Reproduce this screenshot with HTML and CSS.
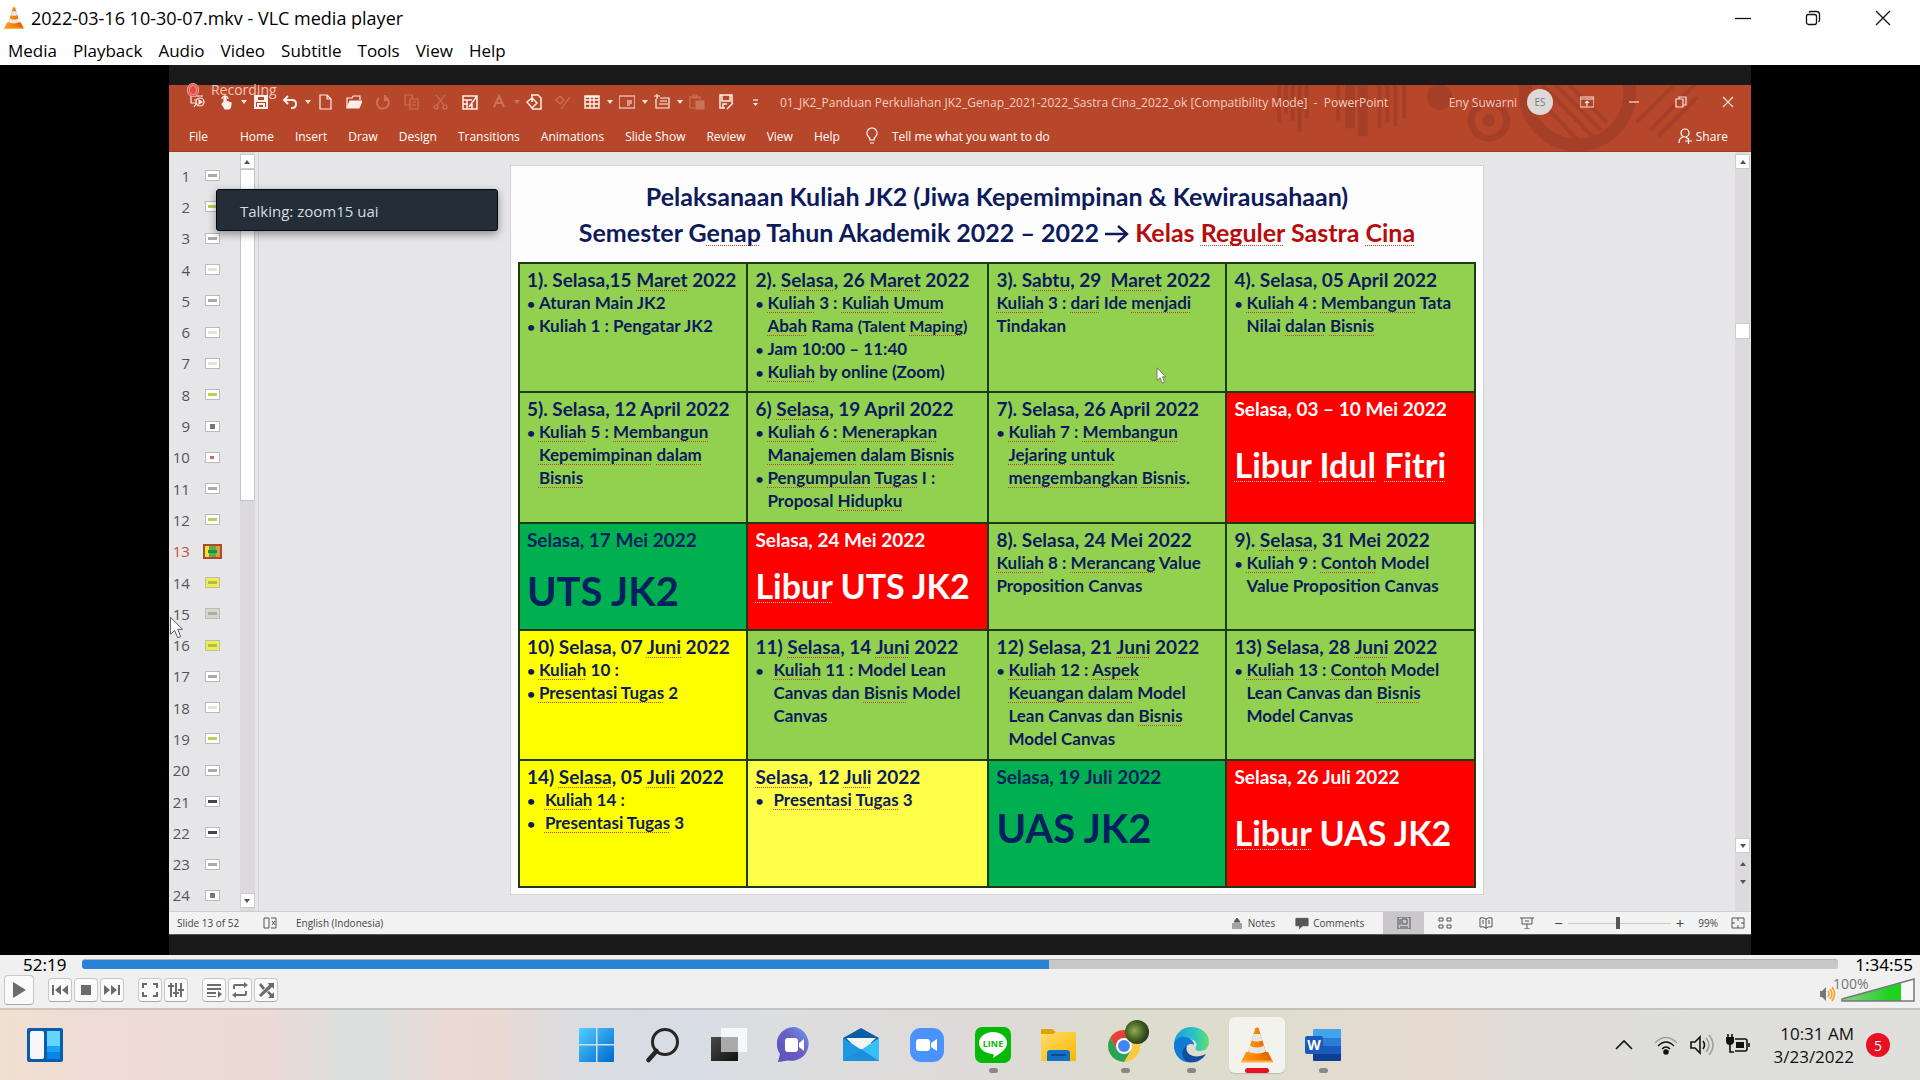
FILE: index.html
```html
<!DOCTYPE html>
<html lang="en">
<head>
<meta charset="utf-8">
<title>2022-03-16 10-30-07.mkv - VLC media player</title>
<link rel="stylesheet" href="styles.css">
</head>
<body>
<svg class="defs" aria-hidden="true">
  <defs>
    <linearGradient id="gWin" x1="0" y1="0" x2="1" y2="1"><stop offset="0" stop-color="#4fd0ff"/><stop offset="1" stop-color="#0067cf"/></linearGradient>
    <linearGradient id="gCone" x1="0" x2="1"><stop offset="0" stop-color="#ff9a1f"/><stop offset=".6" stop-color="#f57c00"/><stop offset="1" stop-color="#d95f00"/></linearGradient>
    <linearGradient id="gChat" x1="1" y1="0" x2="0" y2="1"><stop offset="0" stop-color="#6aa0f5"/><stop offset=".45" stop-color="#6b5fc4"/><stop offset="1" stop-color="#5a50c0"/></linearGradient>
    <linearGradient id="gEdge" x1="0" y1="0" x2="1" y2="0"><stop offset="0" stop-color="#1b9de2"/><stop offset=".6" stop-color="#2cc4c4"/><stop offset="1" stop-color="#66e066"/></linearGradient>
    <linearGradient id="gVol" x1="0" x2="1"><stop offset="0" stop-color="#8fd08f"/><stop offset=".8" stop-color="#1fd21f"/></linearGradient>
    <linearGradient id="gFold" x1="0" y1="0" x2="1" y2="1"><stop offset="0" stop-color="#ffdc6a"/><stop offset="1" stop-color="#f9b800"/></linearGradient>
    <linearGradient id="gDark" x1="0" y1="0" x2="1" y2="1"><stop offset="0" stop-color="#4a4a4a"/><stop offset="1" stop-color="#111"/></linearGradient>
    <symbol id="cone" viewBox="0 0 32 36">
      <path d="M5 25 0 35h32l-5-10z" fill="url(#gCone)"/><path d="M1 33.500h30l1 2H0z" fill="#ffb04d"/>
      <path d="M14.200 1.500C14.800 0 17.200 0 17.800 1.500L25.500 27c-3 3.500-16 3.500-19 0z" fill="url(#gCone)"/>
      <path d="m12.600 7 6.800 0 1.900 6.200c-2 1.800-8.600 1.800-10.600 0zM9 18.500c3 2.600 11 2.600 14 0l1.700 5.700c-3 3-14.400 3-17.400 0z" fill="#e6e6e6"/>
    </symbol>
    <symbol id="cursor" viewBox="0 0 12 19"><path d="M1 1v14l3.500-3 2.500 6 2.500-1-2.500-6H11z" fill="#fff" stroke="#555" stroke-width=".8"/></symbol>
  </defs>
</svg>

<div class="page">
<header class="titlebar">
  <svg class="app-icon" viewBox="0 0 32 36"><use href="#cone"/></svg>
  <h1>2022-03-16 10-30-07.mkv - VLC media player</h1>
  <div class="win-buttons">
    <button aria-label="Minimize"><svg width="16" height="16"><path d="M0 8.500h16"/></svg></button>
    <button aria-label="Restore"><svg width="16" height="16"><rect x="1.500" y="4.500" width="10" height="10" rx="2"/><path d="M4 2.500q.5-1 2-1h5.500q3 0 3 3V10q0 1.500-1 2"/></svg></button>
    <button aria-label="Close"><svg width="16" height="16"><path d="m1 1 14 14M15 1 1 15"/></svg></button>
  </div>
</header>
<nav class="menubar">
  <button>Media</button><button>Playback</button><button>Audio</button><button>Video</button><button>Subtitle</button><button>Tools</button><button>View</button><button>Help</button>
</nav>

<main class="stage">
<div class="video">
  <div class="letterbox"></div>
  <div class="ppt-head">
    <svg class="swirl" viewBox="0 0 440 67" fill="none" stroke="#8e3524" aria-hidden="true">
      <path d="M15 0v38M22 0v28M29 0v36M36 0v48M43 0v34M75 0v36M133 0v42M142 0v34M117 0v44M125 0v38" stroke-width="4"/>
      <path d="M87 0v44M100 0v52" stroke-width="10"/><circle cx="178" cy="12" r="13" fill="#8e3524" stroke="none"/>
      <circle cx="228" cy="36" r="18" stroke-width="7"/><circle cx="228" cy="36" r="6" fill="#8e3524"/>
      <circle cx="318" cy="8" r="53" stroke-width="13"/><path d="m272 8 52 54M282 0l55 56M296 0l46 46M310 0l38 38M392 46 440 -4M378 38l40-40M400 52l40-40" stroke-width="4"/>
    </svg>
    <div class="ppt-title">
      <div class="qat">
        <button aria-label="From beginning"><svg viewBox="0 0 16 16"><path d="M1 2h13M2 2v7h5M5 13l3-4M5 6h3"/><circle cx="11" cy="8" r="4"/><path d="m10 6 3 2-3 2z" fill="currentColor"/></svg></button>
        <button aria-label="Touch mode"><svg viewBox="0 0 16 16"><path d="M6 8V3q1-2 2 0v4l5 2q0 5-2 6H7L4 10z" fill="currentColor"/><path d="M4 5a3 3 0 0 1 6 0"/></svg></button><i class="caret"></i>
        <button aria-label="Save"><svg viewBox="0 0 16 16"><path d="M2 2h12v12H2zM4 2v5h8V2M5 14v-4h6v4" stroke-width="2"/></svg></button>
        <button aria-label="Undo"><svg viewBox="0 0 16 16"><path d="M3 6h7q4 0 4 4t-4 4H9M6 2 2 6l4 4" stroke-width="2"/></svg></button><i class="caret"></i>
        <button aria-label="New"><svg viewBox="0 0 16 16"><path d="M3 1h7l4 4v10H3zM10 1v4h4"/></svg></button>
        <button aria-label="Open"><svg viewBox="0 0 16 16"><path d="M1 14V4h5l1-2h7v4"/><path d="m1 14 3-7h12l-3 7z" fill="currentColor"/></svg></button>
        <button class="dim" aria-label="Redo"><svg viewBox="0 0 16 16"><path d="M10 3a6 6 0 1 1-6 1M10 1v5h4" stroke-width="2"/></svg></button>
        <button class="dim" aria-label="Copy"><svg viewBox="0 0 16 16"><path d="M6 11H1V1h7v4M6 5h8v10H6zM8 8h4M8 11h4"/></svg></button>
        <button class="dim" aria-label="Cut"><svg viewBox="0 0 16 16"><path d="m3 1 8 10M12 1 4 11"/><circle cx="3" cy="13" r="2"/><circle cx="12" cy="13" r="2"/></svg></button>
        <button aria-label="Edit"><svg viewBox="0 0 16 16"><path d="M1 2h14v13H1zM1 6h9M5 6v9M1 10h5M10 10v5M7 13l8-11" stroke-width="1.500"/></svg></button>
        <button class="dim" aria-label="Font colour"><svg viewBox="0 0 16 16"><path d="M3 13 8 2l5 11M5 9h6" stroke-width="2"/></svg></button><i class="caret dim"></i>
        <button aria-label="Format"><svg viewBox="0 0 16 16"><path d="M5 1h7l3 3v11H6M1 8l5-4 5 5-5 5zM6 1v7" stroke-width="1.500"/></svg></button>
        <button class="dim" aria-label="Fill"><svg viewBox="0 0 16 16"><path d="m1 6 4-4 4 4-4 4zM15 3l-6 8-3 4"/></svg></button>
        <button aria-label="Table"><svg viewBox="0 0 16 16"><path d="M1 2h14v12H1zM1 3h14M1 6h14M1 10h14M6 3v11M10 3v11" stroke-width="1.500"/></svg></button><i class="caret"></i>
        <button aria-label="Text box"><svg viewBox="0 0 16 16"><path d="M0 2h16v12H0zM8 7h5M8 9h5M8 11h3"/></svg></button><i class="caret"></i>
        <button aria-label="New slide"><svg viewBox="0 0 16 16"><path d="M2 5v9h13V4H6M6 7h7M5 10h9M3 0v5M0 2h6"/></svg></button><i class="caret"></i>
        <button class="dim" aria-label="Paste"><svg viewBox="0 0 16 16"><path d="M6 14H1V3h10v3M4 1h4v3H4z"/><path d="M7 7h8v8H7z" fill="currentColor"/></svg></button>
        <button aria-label="Save as"><svg viewBox="0 0 16 16"><path d="M14 9V1H2v13h5M4 1v6h8V1M5 14v-4h4M9 15l6-6" stroke-width="1.500"/></svg></button>
        <button aria-label="Customize"><svg viewBox="0 0 16 16"><path d="M6 6h5"/><path d="M6 9h5l-2.500 3z" fill="currentColor" stroke="none"/></svg></button>
      </div>
      <p class="doc-name">01_JK2_Panduan Perkuliahan JK2_Genap_2021-2022_Sastra Cina_2022_ok [Compatibility Mode]&nbsp; - &nbsp;PowerPoint</p>
      <div class="ppt-user"><span>Eny Suwarni</span><b class="avatar">ES</b></div>
      <div class="ppt-win">
        <button aria-label="Ribbon options"><svg viewBox="0 0 14 14"><path d="M0 2h14v10H0zM0 4h14M7 11V6M5 8l2-2 2 2"/></svg></button>
        <button aria-label="Minimize"><svg viewBox="0 0 14 14"><path d="M2 7h10"/></svg></button>
        <button aria-label="Restore"><svg viewBox="0 0 14 14"><path d="M2 4h7v8H2zM5 4V2h7v8H9"/></svg></button>
        <button aria-label="Close"><svg viewBox="0 0 14 14"><path d="m2 2 10 10M12 2 2 12"/></svg></button>
      </div>
    </div>
    <div class="ribbon">
      <button class="file">File</button><button>Home</button><button>Insert</button><button>Draw</button><button>Design</button><button>Transitions</button><button>Animations</button><button>Slide Show</button><button>Review</button><button>View</button><button>Help</button>
      <button class="tell"><svg viewBox="0 0 12 18"><path d="M4 13q0-2-2-4a5 5 0 1 1 8 0q-2 2-2 4zM4 16h4"/></svg>Tell me what you want to do</button>
      <button class="share"><svg viewBox="0 0 14 16"><circle cx="7" cy="5" r="4"/><path d="M1 15q0-5 4-6M8 9l2 2M7 13h7M10.500 10v6"/></svg>Share</button>
    </div>
    <p class="recording"><i></i>Recording</p>
  </div>

  <div class="workspace">
    <ol class="thumbs">
      <li>1<i class="a"></i></li><li>2<i class="y"></i></li><li>3<i class="a"></i></li><li>4<i class="l"></i></li><li>5<i class="a"></i></li><li>6<i class="l"></i></li><li>7<i class="l"></i></li><li>8<i class="y"></i></li><li>9<i class="d"></i></li><li>10<i class="r"></i></li><li>11<i class="a"></i></li><li>12<i class="y"></i></li><li class="on">13<i></i></li><li>14<i class="f"></i></li><li>15<i class="g"></i></li><li>16<i class="f"></i></li><li>17<i class="a"></i></li><li>18<i class="l"></i></li><li>19<i class="y"></i></li><li>20<i class="a"></i></li><li>21<i class="k"></i></li><li>22<i class="k"></i></li><li>23<i class="a"></i></li><li>24<i class="d"></i></li>
    </ol>
    <div class="scroll left"><i class="up"></i><i class="thumb"></i><i class="down"></i></div>
    <div class="canvas">
      <section class="slide">
        <h2>Pelaksanaan Kuliah JK2 (Jiwa Kepemimpinan &amp; Kewirausahaan)<br>Semester G<u>enap</u> Tahun Akademik 2022 – 2022 <svg class="arrow" viewBox="0 0 24 20"><path d="M0 10h22M13 2l9 8-9 8"/></svg> <em>Kelas <u>Reguler</u> Sastra <u>Cina</u></em></h2>
        <table>
          <colgroup><col class="c1"><col class="c2"><col class="c3"><col class="c4"></colgroup>
          <tr class="r1">
            <td><h3>1). Selasa,15 <u>Maret</u> 2022</h3><ul><li>Aturan Main JK2</li><li>Kuliah 1 : Pengatar JK2</li></ul></td>
            <td><h3>2). <u>Selasa</u>, 26 <u>Maret</u> 2022</h3><ul><li><u>Kuliah</u> 3 : <u>Kuliah</u> <u>Umum</u><br><u>Abah</u> Rama <small>(Talent <u>Maping</u>)</small></li><li>Jam 10:00 – 11:40</li><li><u>Kuliah</u> by online (Zoom)</li></ul></td>
            <td><h3>3). S<u>abtu</u>, 29&nbsp; <u>Maret</u> 2022</h3><p><u>Kuliah</u> 3 : <u>dari</u> Ide <u>menjadi</u><br>Tindakan</p></td>
            <td><h3>4). Selasa, 05 April 2022</h3><ul><li><u>Kuliah</u> 4 : <u>Membangun</u> Tata<br>Nilai <u>dalan</u> <u>Bisnis</u></li></ul></td>
          </tr>
          <tr class="r2">
            <td><h3>5). Selasa, 12 April 2022</h3><ul><li><u>Kuliah</u> 5 : <u>Membangun</u><br><u>Kepemimpinan</u> <u>dalam</u><br><u>Bisnis</u></li></ul></td>
            <td><h3>6) <u>Selasa</u>, 19 April 2022</h3><ul><li><u>Kuliah</u> 6 : <u>Menerapkan</u><br><u>Manajemen</u> <u>dalam</u> <u>Bisnis</u></li><li><u>Pengumpulan</u> <u>Tugas</u> I :<br>Proposal <u>Hidupku</u></li></ul></td>
            <td><h3>7). Selasa, 26 April 2022</h3><ul><li><u>Kuliah</u> 7 : <u>Membangun</u><br><u>Jejaring</u> <u>untuk</u><br><u>mengembangkan</u> <u>Bisnis</u>.</li></ul></td>
            <td class="red"><h3>Selasa, 03 – 10 Mei 2022</h3><p class="holiday low"><u>Libur</u> <u>Idul</u> <u>Fitri</u></p></td>
          </tr>
          <tr class="r3">
            <td class="green"><h3>Selasa, 17 Mei 2022</h3><p class="exam">UTS JK2</p></td>
            <td class="red"><h3>Selasa, 24 Mei 2022</h3><p class="holiday"><u>Libur</u> UTS JK2</p></td>
            <td><h3>8). Selasa, 24 Mei 2022</h3><p><u>Kuliah</u> 8 : <u>Merancang</u> Value<br>Proposition Canvas</p></td>
            <td><h3>9). <u>Selasa</u>, 31 Mei 2022</h3><ul><li><u>Kuliah</u> 9 : <u>Contoh</u> Model<br>Value Proposition Canvas</li></ul></td>
          </tr>
          <tr class="r4">
            <td class="yellow"><h3>10) Selasa, 07 <u>Juni</u> 2022</h3><ul><li><u>Kuliah</u> 10 :</li><li><u>Presentasi</u> <u>Tugas</u> 2</li></ul></td>
            <td><h3>11) <u>Selasa</u>, 14 <u>Juni</u> 2022</h3><ul class="wide"><li><u>Kuliah</u> 11 : Model Lean<br>Canvas dan <u>Bisnis</u> Model<br>Canvas</li></ul></td>
            <td><h3>12) Selasa, 21 <u>Juni</u> 2022</h3><ul><li><u>Kuliah</u> 12 : <u>Aspek</u><br><u>Keuangan</u> <u>dalam</u> Model<br>Lean Canvas dan <u>Bisnis</u><br>Model Canvas</li></ul></td>
            <td><h3>13) Selasa, 28 <u>Juni</u> 2022</h3><ul><li><u>Kuliah</u> 13 : <u>Contoh</u> Model<br>Lean Canvas dan <u>Bisnis</u><br>Model Canvas</li></ul></td>
          </tr>
          <tr class="r5">
            <td class="yellow"><h3>14) <u>Selasa</u>, 05 <u>Juli</u> 2022</h3><ul class="wide"><li><u>Kuliah</u> 14 :</li><li><u>Presentasi</u> <u>Tugas</u> 3</li></ul></td>
            <td class="pale"><h3><u>Selasa</u>, 12 <u>Juli</u> 2022</h3><ul class="wide"><li><u>Presentasi</u> <u>Tugas</u> 3</li></ul></td>
            <td class="green"><h3>Selasa, 19 <u>Juli</u> 2022</h3><p class="exam">UAS JK2</p></td>
            <td class="red"><h3>Selasa, 26 <u>Juli</u> 2022</h3><p class="holiday low"><u>Libur</u> UAS JK2</p></td>
          </tr>
        </table>
        <svg class="pointer" viewBox="0 0 12 19"><use href="#cursor"/></svg>
      </section>
    </div>
    <div class="scroll right"><i class="up"></i><i class="knob"></i><i class="down"></i><i class="page-nav up"></i><i class="page-nav down"></i></div>
    <p class="talking">Talking: zoom15 uai</p>
    <svg class="pointer-big" viewBox="0 0 12 19"><use href="#cursor"/></svg>
  </div>

  <footer class="status">
    <span class="s-num">Slide 13 of 52</span>
    <svg class="s-ico s-book" viewBox="0 0 14 12"><path d="M6 11H1V1h5v10M8 1h5v10H8M9 4l3 4M12 4 9 8"/></svg>
    <span class="s-lang">English (Indonesia)</span>
    <button class="s-notes"><svg class="s-ico" viewBox="0 0 12 12"><path d="M1 7h10M1 9h10M1 11h10"/><path d="M3 5h6L6 1z" fill="currentColor"/></svg>Notes</button>
    <button class="s-comm"><svg class="s-ico" viewBox="0 0 15 12"><path d="M1 1h13v8H8l-3 3V9H1z" fill="#555" stroke="#555"/></svg>Comments</button>
    <button class="view on" aria-label="Normal"><svg class="s-ico" viewBox="0 0 14 12"><path d="M1 0h12v12H1zM3 10h8M5 2h5v5H5zM3 2v6"/></svg></button>
    <button class="view" aria-label="Sorter"><svg class="s-ico" viewBox="0 0 14 12"><path d="M1 1h4v3H1zM9 1h4v3H9zM1 8h4v3H1zM9 8h4v3H9z"/></svg></button>
    <button class="view" aria-label="Reading"><svg class="s-ico" viewBox="0 0 14 12"><path d="M7 2v10M7 2Q4 0 1 1v9q3-1 6 1 3-2 6-1V1q-3-1-6 1M3 4h2M3 6h2M9 4h2M9 6h2"/></svg></button>
    <button class="view" aria-label="Slide show"><svg class="s-ico" viewBox="0 0 14 12"><path d="M0 1h14M2 1v6h10V1M7 7v5M4 12h6M5 4h4"/></svg></button>
    <span class="zoom"><b>−</b><input type="range" aria-label="Zoom level" min="0" max="100" value="49"><b>+</b></span>
    <span class="pct">99%</span>
    <svg class="s-ico s-fit" viewBox="0 0 14 12"><path d="M1 1h12v10H1zM7 1v3M7 8v3M1 6h3M10 6h3"/></svg>
  </footer>
  <div class="letterbox end"></div>
</div>
</main>

<section class="controls">
  <div class="seek"><time>52:19</time><input type="range" aria-label="Position" min="0" max="100" value="55"><time>1:34:55</time></div>
  <div class="buttons">
    <button class="play" aria-label="Play"><svg viewBox="0 0 18 18"><path d="M3 1v16l13-8z"/></svg></button>
    <div class="group">
      <button aria-label="Previous"><svg viewBox="0 0 18 18"><path d="M1 4h2v10H1zM10 4v10L4 9zM17 4v10l-6-5z"/></svg></button>
      <button aria-label="Stop"><svg viewBox="0 0 18 18"><path d="M4 4h10v10H4z"/></svg></button>
      <button aria-label="Next"><svg viewBox="0 0 18 18"><path d="M15 4h2v10h-2zM1 4v10l6-5zM8 4v10l6-5z"/></svg></button>
    </div>
    <div class="group">
      <button aria-label="Fullscreen"><svg viewBox="0 0 18 18"><path d="M1 2h5v2H3v3H1zM12 2h5v5h-2V4h-3zM1 11h2v3h3v2H1zM15 11h2v5h-5v-2h3z"/></svg></button>
      <button aria-label="Equalizer"><svg viewBox="0 0 18 18"><path d="M3 2h2v14H3zM1 4h6v2H1zM8 2h2v14H8zM6 11h6v2H6zM13 2h2v14h-2zM11 8h6v2h-6z"/></svg></button>
    </div>
    <div class="group">
      <button aria-label="Playlist"><svg viewBox="0 0 18 18"><path d="M2 3h14v2H2zM2 7h14v2H2zM2 11h9v2H2zM2 15h9v1H2zM13 10l4 3-4 4z"/></svg></button>
      <button aria-label="Loop"><svg viewBox="0 0 18 18"><path d="M2 8V5q0-2 2-2h9V1l4 3-4 3V5H4v3zM16 10v3q0 2-2 2H5v2l-4-3 4-3v2h9v-3z"/></svg></button>
      <button aria-label="Random"><svg viewBox="0 0 18 18"><path d="m2 4 2-2 4 5-2 2zM10 11l2-1 3 3 2-2v6h-6l2-2zM2 14 12 4l-1-2h6v6l-2-2L4 16z"/></svg></button>
    </div>
    <div class="volume">
      <svg class="spk" viewBox="0 0 16 16"><path d="M1 5h2l4-4v14l-4-4H1z" fill="#777"/><path d="M9 5q2 3 0 6M11 3q4 5 0 10M13 1q5 7 0 14" fill="none" stroke="#ff9a1f" stroke-width="1.500"/></svg>
      <div class="vol-meter"><span>100%</span><svg viewBox="0 0 74 24"><path d="M1 21 73 1v22H1z" fill="#f8f8f8"/><path d="M1 21 60 5v18H1z" fill="url(#gVol)"/><path d="M1 21 73 1v22H1z" fill="none" stroke="#777" stroke-width="1.500"/></svg></div>
    </div>
  </div>
</section>

<footer class="taskbar">
  <button class="widgets" aria-label="Widgets"><svg viewBox="0 0 36 34"><rect width="36" height="34" rx="2" fill="#0b5cad"/><rect x="3" y="3" width="14" height="28" rx="2" fill="#f7f7f7"/><path d="M20 3h13v15H20z" fill="#63d6ff"/><path d="M20 18h13v6H20z" fill="#1aa3f5"/><path d="M20 24h13v7H20z" fill="#0584ea"/></svg></button>
  <div class="apps">
    <button aria-label="Start"><svg viewBox="0 0 36 36"><path d="M0 2q0-1 1-1h16v16H0zM18.500 1H34q1 0 1 1v15H18.500zM0 18.500h17V35H1q-1 0-1-1zM18.500 18.500H35V34q0 1-1 1H18.500z" fill="url(#gWin)"/></svg></button>
    <button aria-label="Search"><svg viewBox="0 0 36 36" fill="none" stroke="#262626"><circle cx="20" cy="15" r="12.500" stroke-width="3"/><path d="m11.500 24-8 9" stroke-width="4.500" stroke-linecap="round"/></svg></button>
    <button aria-label="Task view"><svg viewBox="0 0 36 36"><path d="M0 10h27v24H0z" fill="url(#gDark)"/><path d="M10 1h26v24H10z" fill="#fff" opacity=".75"/><path d="M10 10h17v15H10z" fill="#aaa"/></svg></button>
    <button aria-label="Chat"><svg viewBox="0 0 36 36"><path d="M18 0a17 17 0 1 1-7 33.500L1 35l2-8A17 17 0 0 1 18 0z" fill="url(#gChat)"/><rect x="8" y="11" width="13" height="14" rx="3" fill="#fff"/><path d="m22 16 5-4v12l-5-4z" fill="#fff"/></svg></button>
    <button aria-label="Mail"><svg viewBox="0 0 36 36"><path d="M0 11 18 1l18 10v5H0z" fill="#0a5ea8"/><path d="M3 11h30L18 25z" fill="#f4f4f4"/><path d="M0 11v23h36z" fill="#1b9ae4"/><path d="m18 23 18-12v23z" fill="#36c0f6"/><path d="m0 34 18-12 18 12z" fill="#1e8fdc"/></svg></button>
    <button aria-label="Zoom"><svg viewBox="0 0 36 36"><rect x="1" y="1" width="34" height="34" rx="11" fill="#4a93ff"/><rect x="7" y="12" width="14" height="12" rx="3" fill="#fff"/><path d="m22 16 6-4v12l-6-4z" fill="#fff"/></svg></button>
    <button class="run" aria-label="LINE"><svg viewBox="0 0 36 36"><rect width="36" height="36" rx="7" fill="#06b906"/><path d="M18 5c8 0 14 5 14 11 0 7-8 11-14 15 1-3 1-4-1-4C10 26 4 22 4 16 4 10 10 5 18 5z" fill="#fff"/><text x="18" y="20" text-anchor="middle" font-size="9" font-weight="700" fill="#06b906">LINE</text></svg></button>
    <button aria-label="File Explorer"><svg viewBox="0 0 36 36"><path d="M0 2h11l4 3-3 5H0z" fill="#dda20c"/><path d="M0 7h12l3-2h20v29H0z" fill="url(#gFold)"/><path d="M6 34V26q0-3 3-3h17q3 0 3 3v8z" fill="#1070c4"/><path d="M10 28h15" stroke="#0a4c8c" stroke-width="2"/></svg></button>
    <button class="run" aria-label="Chrome"><svg viewBox="0 0 36 36"><circle cx="17" cy="19" r="16" fill="#fbc93c"/><path d="M3.200 11A16 16 0 0 1 31 11H17l-7 12z" fill="#e1433b"/><path d="M3.200 11A16 16 0 0 0 17 35l7-12-7 4-7-4z" fill="#28a35a"/><circle cx="17" cy="19" r="8" fill="#fff"/><circle cx="17" cy="19" r="6" fill="#4285f4"/></svg><i class="profile"></i></button>
    <button class="run" aria-label="Edge"><svg viewBox="0 0 36 36"><path d="M1 18C1 7 9 0 18 0c11 0 18 7 18 15 0 6-4 9-9 9-4 0-5-2-4-4 3-7-7-10-13-6C5 16 2 22 5 28q-4-4-4-10z" fill="url(#gEdge)"/><path d="M1 17c2-6 7-8 11-7 5 1 9 4 9 8-5-3-10 2-8 8 2 5 7 8 13 7-13 7-26-2-25-16z" fill="#0f7bd6"/><path d="M14 19c-3 8 7 14 19 8-5 8-13 10-20 7-5-5-5-12 1-15z" fill="#114f9e"/></svg></button>
    <button class="active" aria-label="VLC media player"><svg viewBox="0 0 32 36"><use href="#cone"/></svg></button>
    <button class="run" aria-label="Word"><svg viewBox="0 0 36 36"><path d="M8 3q0-1 1-1h26q1 0 1 1v8H8z" fill="#41a5ee"/><path d="M8 11h28v8H8z" fill="#2b7cd3"/><path d="M8 19h28v8H8z" fill="#185abd"/><path d="M8 27h28v6q0 1-1 1H9q-1 0-1-1z" fill="#103f91"/><rect y="9" width="18" height="18" rx="2" fill="#185abd"/><text x="9" y="23" text-anchor="middle" font-size="14" font-weight="700" fill="#fff">W</text></svg></button>
  </div>
  <div class="tray">
    <svg class="chev" viewBox="0 0 18 24"><path d="m1 16 8-8 8 8"/></svg>
    <svg class="net" viewBox="0 0 24 24"><path d="M1 10Q12-1 23 10" opacity=".3"/><path d="M4 13q8-8 16 0M8 16q4-4 8 0"/><circle cx="12" cy="19" r="2" fill="#111"/></svg>
    <svg class="net" viewBox="0 0 24 24"><path d="M1 9h4l5-5v16l-5-5H1zM13 8q3 4 0 8"/><path d="M16 5q6 7 0 14M19 2q8 10 0 20" opacity=".3"/></svg>
    <svg class="net" viewBox="0 0 24 24"><path d="M9 6h10q2 0 2 2v8q0 2-2 2H9M23 10v4"/><path d="M10 9h8v6h-8zM0 4h8v5q-1 3-4 3-4 0-4-4z" fill="#111" stroke="none"/><path d="M2 1v4M6 1v4M4 11v8h4"/></svg>
    <div class="clock"><time>10:31 AM</time><time>3/23/2022</time></div>
    <b class="badge">5</b>
  </div>
</footer>
</div>
</body>
</html>
```
FILE: styles.css
```css
* { box-sizing: border-box; }
html, body { margin: 0; height: 100%; }
body { font-family: "Open Sans", "Noto Sans", sans-serif; font-size: 16px; color: #000; }
button { border: 0; background: none; padding: 0; margin: 0; font: inherit; color: inherit; }
h1, h2, h3, p, ul, ol { margin: 0; padding: 0; list-style: none; }
svg { display: block; }
.defs { position: absolute; width: 0; height: 0; }
.page { min-height: 100%; display: flex; flex-direction: column; background: #fff; }

/* VLC window frame */
.titlebar { display: flex; align-items: center; height: 35px; padding: 0 2px 0 4px; }
.app-icon { width: 20px; height: 24px; margin-right: 7px; }
.titlebar h1 { font-size: 18px; line-height: 24px; font-weight: 400; flex: 1; }
.win-buttons { display: flex; }
.win-buttons button { width: 70px; height: 34px; display: grid; place-items: center; }
.win-buttons svg { fill: none; stroke: #111; stroke-width: 1.3; }
.menubar { display: flex; gap: 16px; height: 30px; padding: 0 8px; font-size: 17px; }

/* Video picture */
.stage { flex: 1; display: flex; justify-content: center; background: #000; }
.video { width: 82.4%; display: flex; flex-direction: column; font-size: 12px; }
.letterbox { height: 20px; background: #1a1a1a; }
.letterbox.end { border-top: 1px solid #555; height: 21px; }
.ppt-head { position: relative; height: 67px; background: #b7472a; color: #fbe3db; border-bottom: 1px solid #a03c22; }
.swirl { position: absolute; right: 50px; top: 0; width: 440px; height: 66px; opacity: .4; }
.ppt-title { position: relative; display: flex; align-items: center; height: 34px; }
.qat { display: flex; align-items: center; padding-left: 14px; }
.qat button { width: 29px; height: 24px; display: grid; place-items: center; color: #fdeee9; }
.qat svg { width: 16px; height: 16px; fill: none; stroke: currentColor; stroke-width: 1.2; }
.qat .dim { color: #cc7258; }
.caret { width: 6px; border: 3px solid transparent; border-top: 4px solid #fbe3db; border-bottom: 0; }
.caret.dim { border-top-color: #cc7258; }
.doc-name { margin-left: 10px; white-space: nowrap; color: #f6cdbf; }
.ppt-user { margin-left: auto; display: flex; align-items: center; gap: 10px; color: #f6cdbf; }
.avatar { width: 26px; height: 26px; border-radius: 50%; background: #dcd9d8; color: #777; font-size: 10px; font-weight: 400; display: grid; place-items: center; }
.ppt-win { display: flex; margin-left: 10px; }
.ppt-win button { width: 47px; height: 30px; display: grid; place-items: center; }
.ppt-win svg { width: 14px; height: 14px; fill: none; stroke: #fbe3db; stroke-width: 1.2; }
.ribbon { position: relative; display: flex; align-items: center; gap: 21px; height: 32px; padding: 2px 23px 0 20px; color: #fff; }
.ribbon .file { margin-right: 11px; }
.ribbon svg { fill: none; stroke: currentColor; stroke-width: 1.2; }
.tell { display: flex; align-items: center; gap: 14px; margin-left: 5px; }
.tell svg { width: 12px; height: 18px; }
.share { display: flex; align-items: center; gap: 4px; margin-left: auto; }
.share svg { width: 14px; height: 16px; }
.recording { position: absolute; left: 18px; top: -5px; display: flex; align-items: center; gap: 12px; font-size: 14px; line-height: 20px; color: #f3c6ba; }
.recording i { width: 12px; height: 14px; border-radius: 6px; background: #e24a45; border: 3px double #f2a59a; }

/* PowerPoint workspace */
.workspace { position: relative; flex: 1; display: flex; background: #e6e6e8; }
.thumbs { width: 71px; padding: 8px 20px 0 0; display: flex; flex-direction: column; font-size: 15px; color: #555; }
.thumbs li { flex: 1; display: flex; align-items: center; justify-content: flex-end; gap: 15px; line-height: 20px; }
.thumbs i { width: 15px; height: 11px; background: #fff; border: 1px solid #bbb; display: grid; place-items: center; }
.thumbs i::after { content: ""; width: 9px; height: 3px; background: #aaa; }
.thumbs .y::after { background: #c5cc55; }
.thumbs .l::after { background: #e2e6d8; }
.thumbs .r::after { background: #d66; width: 4px; }
.thumbs .d::after { background: #777; width: 5px; height: 5px; }
.thumbs .k::after { background: #445; }
.thumbs .f { background: #eef04a; }
.thumbs .f::after { background: #b6b850; }
.thumbs .g { background: #d5d8c6; }
.thumbs .on { color: #c9503a; gap: 13px; margin-right: -2px; }
.thumbs .on i { width: 19px; height: 15px; background: linear-gradient(90deg, #e8e83a 30%, #57b04a 30% 75%, #d2a04a 75%); border: 2px solid #b7472a; }
.thumbs .on i::after { background: #2c8a3c; }
.scroll { width: 15px; display: flex; flex-direction: column; align-items: stretch; background: #dcdadd; }
.scroll .up, .scroll .down { height: 15px; background: #fff; border: 1px solid #ccc; display: grid; place-items: center; }
.scroll .up::after { content: ""; border: 3px solid transparent; border-bottom: 4px solid #555; border-top: 0; }
.scroll .down::after { content: ""; border: 3px solid transparent; border-top: 4px solid #555; border-bottom: 0; }
.scroll.left { padding: 2px 0 3px; }
.scroll .thumb { height: 44%; background: #fff; border: 1px solid #c4c4c6; }
.scroll.left .down { margin-top: auto; }
.scroll.right { padding: 2px 0 22px; margin-right: 1px; }
.scroll .knob { height: 16px; margin-top: 154px; background: #fff; border: 1px solid #ccc; }
.scroll.right .down { margin-top: auto; }
.scroll.right .page-nav { margin: 3px 0 0; background: none; border: 0; }
.canvas { flex: 1; display: flex; flex-direction: column; align-items: center; padding: 13px 0 16px; margin-left: 3px; border-left: 1px solid #d2d2d4; }
.slide { position: relative; width: 66%; flex: 1; background: #fdfdfd; border: 1px solid #d4d4d6; padding: 12px 7px 6px; font-family: Lato, "Open Sans", sans-serif; color: #0d1b5c; white-space: nowrap; }
.slide h2 { font-size: 25px; line-height: 36px; font-weight: 700; text-align: center; padding-bottom: 12px; }
.slide em { font-style: normal; color: #b80c0c; }
.slide u { text-decoration: underline dotted 1px #d0402c; text-decoration-skip-ink: none; text-underline-offset: 3px; }
.arrow { display: inline-block; width: 24px; height: 20px; vertical-align: -2px; fill: none; stroke: #0d1b5c; stroke-width: 2.5; }
.slide table { width: 100%; table-layout: fixed; border-collapse: collapse; font-size: 17px; line-height: 23px; font-weight: 700; }
.c1 { width: 23.9%; } .c2 { width: 25.2%; } .c3 { width: 24.9%; } .c4 { width: 26%; }
.r1 { height: 129px; } .r2 { height: 131px; } .r3 { height: 107px; } .r4 { height: 130px; } .r5 { height: 127px; }
.slide td { vertical-align: top; padding: 4px 7px 0; border: 2px solid #1d3a12; background: #92d050; }
.slide h3 { font-size: 19px; line-height: 23px; font-weight: 700; }
.slide small { font-size: 16px; }
.slide li { padding-left: 12px; }
.slide li::before { content: "•"; display: inline-block; width: 12px; margin-left: -12px; font-size: 14px; line-height: 16px; }
.slide .wide li { padding-left: 18px; }
.slide .wide li::before { width: 18px; margin-left: -18px; }
.slide .green { background: #00b050; color: #002060; }
.slide .red { background: #f00; color: #fff; }
.slide .yellow { background: #ff0; }
.slide .pale { background: #ffff4a; }
.exam { font-size: 40px; line-height: 48px; padding-top: 16px; }
.holiday { font-size: 34px; line-height: 40px; padding-top: 15px; }
.holiday.low { padding-top: 25px; }
.red .holiday u { text-decoration-color: #fcc; }
.pointer { position: absolute; left: 66.4%; top: 201px; width: 11px; height: 17px; }
.pointer-big { position: absolute; left: 0; top: 464px; width: 15px; height: 23px; }
.talking { position: absolute; left: 47px; top: 37px; width: 282px; height: 42px; padding: 0 23px; line-height: 42px; font-size: 15px; color: #d8dce0; background: #242e39; border: 1px solid #05080b; border-radius: 3px; box-shadow: 0 3px 8px rgba(0,0,0,.4); }

/* PowerPoint status bar */
.status { height: 23px; display: flex; align-items: center; background: #f2f2f2; border-top: 1px solid #cfcfcf; padding: 0 6px 0 8px; font-size: 10px; color: #444; }
.s-ico { width: 14px; height: 12px; fill: none; stroke: #555; stroke-width: 1; color: #555; }
.s-num { width: 86px; }
.s-lang { margin-left: 19px; }
.s-notes, .s-comm { display: flex; align-items: center; gap: 4px; }
.s-notes { margin-left: auto; }
.s-comm { margin: 0 19px 0 20px; }
.view { width: 41px; height: 22px; display: grid; place-items: center; }
.view.on { background: #c9c7ca; }
.zoom { display: flex; align-items: center; gap: 5px; margin-left: 7px; }
.zoom b { font-size: 15px; font-weight: 400; line-height: 16px; }
input[type=range] { appearance: none; margin: 0; background: none; }
.zoom input { width: 103px; height: 12px; }
.zoom input::-webkit-slider-runnable-track { height: 12px; background: linear-gradient(#ccc, #ccc) center / 100% 1px no-repeat; }
.zoom input::-webkit-slider-thumb { appearance: none; width: 4px; height: 12px; background: #555; }
.pct { margin: 0 13px 0 14px; }

/* VLC controls */
.controls { background: #f0f0f0; }
.seek { display: flex; align-items: flex-start; padding: 0 7px 0 23px; height: 20px; }
.seek time { font-family: "Noto Sans", sans-serif; font-size: 17px; line-height: 20px; }
.seek input { flex: 1; height: 10px; margin: 4px 17px 0 16px; }
.seek input::-webkit-slider-runnable-track { height: 10px; border-radius: 3px; border-top: 1px solid #b0b0b0; background: linear-gradient(90deg, #2a82d6 55%, #c8c8c8 55%); }
.seek input::-webkit-slider-thumb { appearance: none; width: 1px; height: 9px; background: #2a82d6; }
.buttons { display: flex; align-items: center; gap: 14px; height: 33px; padding: 0 5px 3px 4px; }
.group { display: flex; gap: 2px; }
.buttons button { width: 24px; height: 24px; display: grid; place-items: center; background: #fafafa; border: 1px solid #c8c8c8; border-bottom-color: #aaa; border-radius: 4px; }
.buttons button svg { width: 18px; height: 18px; fill: #6b6b6b; }
.buttons .play { width: 30px; height: 30px; }
.volume { margin-left: auto; display: flex; align-items: flex-end; gap: 6px; }
.spk { width: 16px; height: 16px; }
.vol-meter { position: relative; }
.vol-meter svg { width: 74px; height: 24px; }
.vol-meter span { position: absolute; left: -8px; top: -3px; font-size: 14px; line-height: 18px; color: #777; }

/* Windows taskbar */
.taskbar { position: relative; height: 72px; display: flex; align-items: center; justify-content: space-between; padding: 0 30px 0 27px; border-top: 2px solid rgba(120,120,110,.25);
  background: linear-gradient(90deg, #f0e0d0, #efdcd6 4%, #ecdad5 14%, #dde0df 18%, #dddfde 20%, #ebdad4 23%, #e9d9d3 26%, #dadce0 30%, #d8dde5 36%, #dddddd 42%, #dedad9 50%, #dcdccf 58%, #e0dccf 68%, #e7dad0 75%, #dddcd8 80%, #dfe0dd); }
.widgets svg { width: 36px; height: 34px; }
.apps { position: absolute; left: 50%; top: 7px; transform: translateX(-50%); display: flex; gap: 10px; }
.apps button { position: relative; width: 56px; height: 56px; display: grid; place-items: center; border-radius: 6px; }
.apps svg { width: 36px; height: 36px; }
.apps text { font-family: "Open Sans", sans-serif; }
.apps .run::after, .apps .active::after { content: ""; position: absolute; bottom: 0; left: 24px; width: 9px; height: 5px; border-radius: 3px; background: #888; }
.apps .active { background: rgba(247,247,243,.85); box-shadow: 0 1px 1px rgba(0,0,0,.15); }
.apps .active::after { left: 16px; width: 24px; background: #e81123; }
.profile { position: absolute; top: 3px; right: 4px; width: 24px; height: 24px; border-radius: 50%; background: radial-gradient(circle at 40% 45%, #9aa85a, #4a6a24 40%, #1e2a18 80%); }
.tray { margin-left: auto; display: flex; align-items: center; gap: 12px; }
.tray svg { fill: none; stroke: #111; stroke-width: 1.6; }
.chev { width: 18px; height: 24px; margin-right: 9px; }
.net { width: 24px; height: 24px; }
.clock { display: grid; justify-items: end; width: 92px; font-size: 17px; line-height: 23px; color: #111; }
.badge { width: 24px; height: 24px; border-radius: 50%; background: #e81123; color: #fff; font-size: 14px; font-weight: 400; display: grid; place-items: center; }
```
